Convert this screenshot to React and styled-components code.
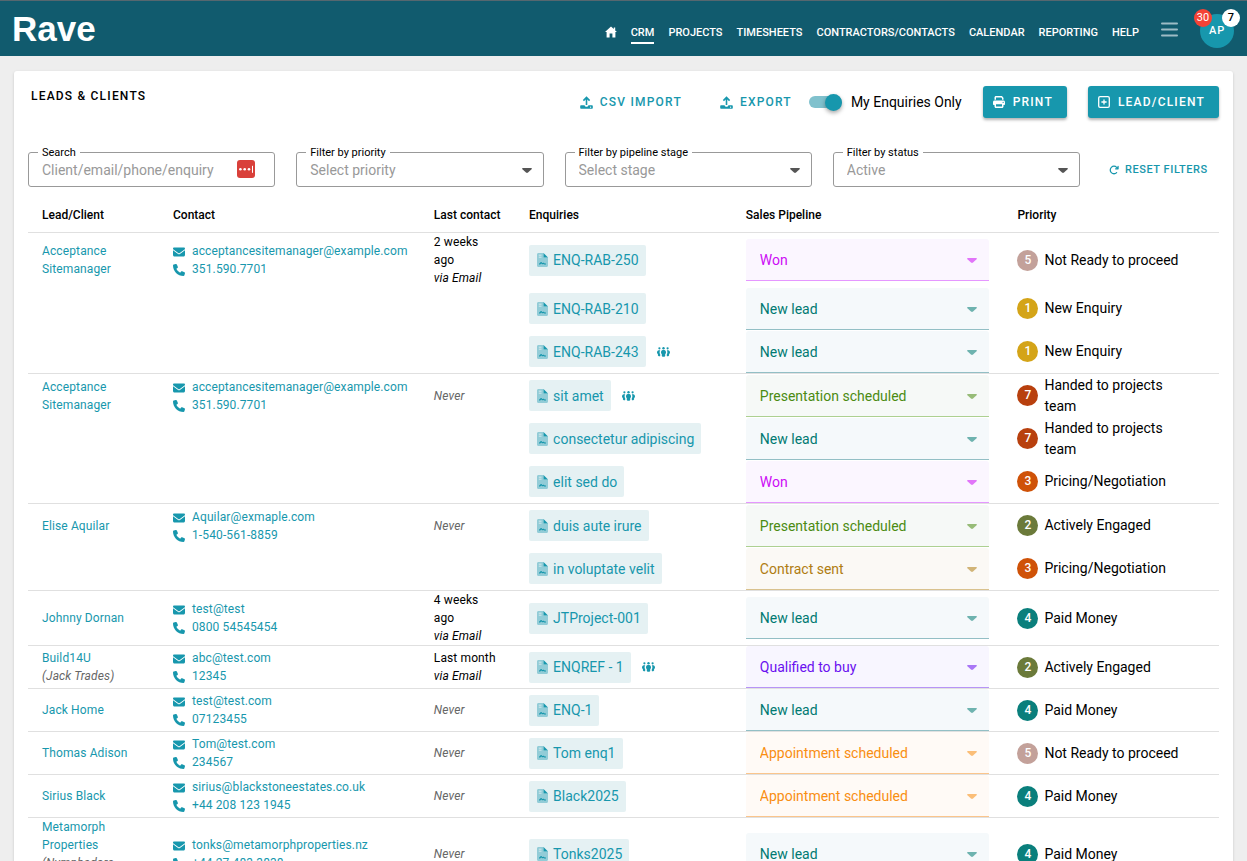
import {FaArrowRotateRight, FaEnvelope, FaPhone, FaPrint} from 'react-icons/fa6'
import styled, {createGlobalStyle, css} from 'styled-components'

const GlobalStyle = createGlobalStyle`
  :root {
    --teal: #1797ad;
    --teal-dark: #115b6e;
    --line: #e0e0e0;
  }

  * {
    box-sizing: border-box;
  }

  body {
    margin: 0;
    background-color: #eee;
    color: #000;
    font-family: Roboto, "Liberation Sans", sans-serif;
    font-size: 12px;
    line-height: 18px;
  }

  button, input, select {
    margin: 0;
    font-family: inherit;
  }

  a {
    color: var(--teal);
    text-decoration: none;
  }
`

const Header = styled.header`
  display: flex;
  align-items: center;
  height: 56px;
  padding: 0 13px 0 12px;
  border-top: 1px solid #56676f;
  background-color: var(--teal-dark);
`

const Logo = styled.a`
  margin-right: auto;
  color: #fff;
  font-family: "Liberation Sans", sans-serif;
  font-size: 35px;
  font-weight: bold;
  line-height: 54px;
`

const Nav = styled.nav`
  display: flex;
  align-items: center;
  gap: 14px;
  margin-top: 8px;
`

const NavLink = styled.a`
  display: flex;
  height: 22px;
  border-bottom: 2px solid ${({$active}) => ($active ? '#fff' : 'transparent')};
  color: #fff;
  font-size: 11px;
  font-weight: 500;
  line-height: 21px;

  svg {
    margin-top: 4px;
  }
`

const MenuButton = styled.button`
  display: flex;
  margin: 2px 22px 0;
  padding: 0;
  border: 0;
  background: none;
  color: #9dbcc5;
  cursor: pointer;
`

const Avatar = styled.button`
  position: relative;
  width: 34px;
  height: 34px;
  margin-top: 4px;
  padding: 0;
  border: 0;
  border-radius: 50%;
  background-color: var(--teal);
  color: #fff;
  font-size: 11px;
  font-weight: 500;
  letter-spacing: .08em;
`

const Badge = styled.span`
  position: absolute;
  top: -5px;
  ${({$side}) => $side}: -6px;
  width: 18px;
  height: 18px;
  border-radius: 50%;
  background-color: ${({$red}) => ($red ? '#f44336' : '#fff')};
  color: ${({$red}) => ($red ? '#fff' : '#000')};
  font-size: 11px;
  font-weight: ${({$red}) => ($red ? 400 : 500)};
  line-height: 18px;
  letter-spacing: 0;
`

const Card = styled.main`
  margin: 15px 14px;
  padding: 15px 14px;
  border-radius: 3px;
  background-color: #fff;
  box-shadow: 0 1px 3px rgba(0, 0, 0, .16);
`

const Toolbar = styled.div`
  display: flex;
  align-items: center;
  height: 32px;
`

const Title = styled.h1`
  align-self: flex-start;
  margin: 1px auto 0 3px;
  font-size: 12px;
  font-weight: 500;
  letter-spacing: .1em;
`

const Button = styled.button`
  display: inline-flex;
  align-items: center;
  gap: ${({$text}) => ($text ? '7px' : '8px')};
  height: 32px;
  padding: 0 ${({$text}) => ($text ? '0' : '14px 0 10px')};
  border: 0;
  border-radius: 3px;
  background-color: ${({$text}) => ($text ? 'transparent' : 'var(--teal)')};
  box-shadow: ${({$text}) => ($text ? 'none' : '0 2px 3px rgba(0, 0, 0, .3)')};
  color: ${({$text}) => ($text ? 'var(--teal)' : '#fff')};
  font-size: 12px;
  font-weight: 500;
  letter-spacing: .1em;
  white-space: nowrap;
  cursor: pointer;
`

const ResetButton = styled(Button)`
  gap: 6px;
  height: 35px;
  padding-left: 8px;
  font-size: 11px;
  letter-spacing: .05em;
`

const Actions = styled.div`
  display: flex;
  align-items: center;
  gap: 21px;
`

const Transfers = styled.div`
  display: flex;
  gap: 38px;
`

const SwitchGroup = styled.div`
  display: flex;
  align-items: center;
  gap: 17px;
`

const Switch = styled.label`
  display: flex;
  align-items: center;
  gap: 9px;
  font-size: 14px;

  input {
    display: flex;
    align-items: center;
    justify-content: flex-end;
    width: 33px;
    height: 12px;
    margin: 0;
    border-radius: 6px;
    background-color: #80c1cd;
    appearance: none;
  }

  input::before {
    content: '';
    width: 17px;
    height: 17px;
    border-radius: 50%;
    background-color: var(--teal);
    box-shadow: 0 2px 4px rgba(0, 0, 0, .35);
  }
`

const Filters = styled.div`
  display: grid;
  grid-template-columns: repeat(4, 1fr) 118px;
  gap: 21px;
  margin-top: 34px;
`

const Field = styled.div`
  position: relative;

  label {
    position: absolute;
    top: -9px;
    left: 10px;
    padding: 0 4px;
    background-color: #fff;
    font-size: 11px;
    line-height: 19px;
  }
`

const FieldAddon = styled.span`
  position: absolute;
  top: 8px;
  right: 20px;
  display: flex;
`

const controlStyle = css`
  display: block;
  width: 100%;
  height: 35px;
  padding: 0 13px;
  border: 1px solid #999;
  border-radius: 3px;
  background-color: #fff;
  color: #999;
  font-size: 14px;
  appearance: none;
`

const TextInput = styled.input`
  ${controlStyle}

  &::placeholder {
    color: #999;
  }
`

const Select = styled.select`
  ${controlStyle}
`

const CaretIcon = styled.svg`
  position: absolute;
  top: calc(50% - 2px);
  right: 12px;
  width: 10px;
  height: 5px;
  fill: ${({$color}) => $color};
  opacity: ${({$faded}) => ($faded ? .55 : 1)};
  pointer-events: none;
`

const Table = styled.table`
  width: 100%;
  margin-top: 10px;
  border-spacing: 0;
  table-layout: fixed;

  th {
    height: 36px;
    padding: 0 14px;
    border-bottom: 1px solid var(--line);
    font-weight: 500;
    text-align: left;
    white-space: nowrap;
  }

  td {
    height: 43px;
    padding: 0 14px;
    letter-spacing: .01em;
  }

  tbody tr:first-child td {
    height: 44px;
    border-top: 1px solid var(--line);
  }

  tbody tr:only-child td {
    height: 43px;
  }

  thead + tbody tr:first-child td {
    border-top: 0;
  }
`

const Muted = styled.em`
  color: #666;
`

const ContactLink = styled.a`
  display: flex;
  align-items: center;
  gap: 7px;
  white-space: nowrap;

  svg {
    flex: none;
    margin-top: 2px;
  }
`

const EnquiryCell = styled.div`
  display: flex;
  align-items: center;
  gap: 11px;
`

const EnquiryLink = styled.a`
  display: inline-flex;
  align-items: center;
  gap: 5px;
  height: 31px;
  padding: 0 7px 0 8px;
  border-radius: 2px;
  background-color: #e5f1f3;
  font-size: 14px;
  letter-spacing: 0;
  white-space: nowrap;
`

const StageBox = styled.div`
  position: relative;
`

const StageSelect = styled.select`
  display: block;
  width: 100%;
  height: 42px;
  padding: 1px 14px 0;
  border: 0;
  border-bottom: 1px solid ${({$stage}) => $stage.line};
  border-radius: 3px 3px 0 0;
  background-color: ${({$stage}) => $stage.background};
  color: ${({$stage}) => $stage.color};
  font-size: 14px;
  appearance: none;
`

const PriorityCell = styled.div`
  display: flex;
  align-items: center;
  gap: 6px;
  padding-right: 24px;
  font-size: 14px;
  letter-spacing: 0;
  line-height: 21px;
`

const PriorityDot = styled.span`
  flex: none;
  width: 21px;
  height: 21px;
  border-radius: 50%;
  background-color: ${({$color}) => $color};
  color: #fff;
  font-size: 12px;
  font-weight: 500;
  text-align: center;
`

const STAGES = {
  'Won': {color: '#cc0cf5', line: '#e597ff', background: '#fbf6ff'},
  'New lead': {color: '#007a72', line: '#93bfc5', background: '#f5f9fb'},
  'Presentation scheduled': {color: '#4b8b12', line: '#add091', background: '#f6f9f7'},
  'Contract sent': {color: '#b07d12', line: '#d9c28e', background: '#fbf9f5'},
  'Qualified to buy': {color: '#6a10f0', line: '#b794f6', background: '#f8f6ff'},
  'Appointment scheduled': {color: '#f98e12', line: '#fbc58c', background: '#fffaf6'},
}

const PRIORITIES = {
  1: {name: 'New Enquiry', color: '#d4a418'},
  2: {name: 'Actively Engaged', color: '#6b7a3a'},
  3: {name: 'Pricing/Negotiation', color: '#cf5208'},
  4: {name: 'Paid Money', color: '#0a7f7c'},
  5: {name: 'Not Ready to proceed', color: '#c3a19a'},
  7: {name: 'Handed to projects team', color: '#b8400e'},
}

const LEADS = [
  {
    name: 'Acceptance Sitemanager',
    email: 'acceptancesitemanager@example.com',
    phone: '351.590.7701',
    last: '2 weeks ago',
    enquiries: [
      {ref: 'ENQ-RAB-250', stage: 'Won', priority: 5},
      {ref: 'ENQ-RAB-210', stage: 'New lead', priority: 1},
      {ref: 'ENQ-RAB-243', stage: 'New lead', priority: 1, shared: true},
    ],
  },
  {
    name: 'Acceptance Sitemanager',
    email: 'acceptancesitemanager@example.com',
    phone: '351.590.7701',
    enquiries: [
      {ref: 'sit amet', stage: 'Presentation scheduled', priority: 7, shared: true},
      {ref: 'consectetur adipiscing', stage: 'New lead', priority: 7},
      {ref: 'elit sed do', stage: 'Won', priority: 3},
    ],
  },
  {
    name: 'Elise Aquilar',
    email: 'Aquilar@exmaple.com',
    phone: '1-540-561-8859',
    enquiries: [
      {ref: 'duis aute irure', stage: 'Presentation scheduled', priority: 2},
      {ref: 'in voluptate velit', stage: 'Contract sent', priority: 3},
    ],
  },
  {
    name: 'Johnny Dornan',
    email: 'test@test',
    phone: '0800 54545454',
    last: '4 weeks ago',
    enquiries: [{ref: 'JTProject-001', stage: 'New lead', priority: 4}],
  },
  {
    name: 'Build14U',
    person: '(Jack Trades)',
    email: 'abc@test.com',
    phone: '12345',
    last: 'Last month',
    enquiries: [{ref: 'ENQREF - 1', stage: 'Qualified to buy', priority: 2, shared: true}],
  },
  {
    name: 'Jack Home',
    email: 'test@test.com',
    phone: '07123455',
    enquiries: [{ref: 'ENQ-1', stage: 'New lead', priority: 4}],
  },
  {
    name: 'Thomas Adison',
    email: 'Tom@test.com',
    phone: '234567',
    enquiries: [{ref: 'Tom enq1', stage: 'Appointment scheduled', priority: 5}],
  },
  {
    name: 'Sirius Black',
    email: 'sirius@blackstoneestates.co.uk',
    phone: '+44 208 123 1945',
    enquiries: [{ref: 'Black2025', stage: 'Appointment scheduled', priority: 4}],
  },
  {
    name: 'Metamorph Properties',
    person: '(Nymphadora Tonks)',
    email: 'tonks@metamorphproperties.nz',
    phone: '+44 27 483 3838',
    enquiries: [{ref: 'Tonks2025', stage: 'New lead', priority: 4}],
  },
]

const NAV_ITEMS = [
  'CRM',
  'PROJECTS',
  'TIMESHEETS',
  'CONTRACTORS/CONTACTS',
  'CALENDAR',
  'REPORTING',
  'HELP',
]

const COLUMNS = [
  {title: 'Lead/Client', width: '11%'},
  {title: 'Contact', width: '21.9%'},
  {title: 'Last contact', width: '8%'},
  {title: 'Enquiries', width: '18.2%'},
  {title: 'Sales Pipeline', width: '22.8%'},
  {title: 'Priority', width: '18.1%'},
]

const HomeIcon = () => (
  <svg width='12' height='12' viewBox='0 0 12 12' fill='currentColor'>
    <path d='M6 .6 0 6h1.6v5.4h3V7.6h2.8v3.8h3V6H12L10.2 4.4V1.6H8.8v1.5z'/>
  </svg>
)

const MenuIcon = () => (
  <svg width='17' height='15' viewBox='0 0 17 15' stroke='currentColor' strokeWidth='2' strokeLinecap='round'>
    <path d='M1 1.5h15M1 7.5h15M1 13.5h15'/>
  </svg>
)

const UploadIcon = () => (
  <svg width='13' height='13' viewBox='0 0 13 13' fill='none' stroke='currentColor'>
    <path d='M6.5 9V1.8M3.4 4.6l3.1-3.1 3.1 3.1' strokeWidth='1.6'/>
    <path
      d='M1 9.2h3.6c0 .9.8 1.5 1.9 1.5s1.9-.6 1.9-1.5H12c.5 0 .8.3.8.8v2c0 .5-.3.8-.8.8H1c-.5 0-.8-.3-.8-.8v-2c0-.5.3-.8.8-.8z'
      fill='currentColor'
      stroke='none'
    />
    <circle cx='10.6' cy='11.2' r='.6' fill='#fff' stroke='none'/>
  </svg>
)

const PlusSquareIcon = () => (
  <svg width='12' height='12' viewBox='0 0 12 12' fill='none' stroke='currentColor' strokeWidth='1.3'>
    <rect x='.7' y='.7' width='10.6' height='10.6' rx='1.4'/>
    <path d='M6 3.4v5.2M3.4 6h5.2'/>
  </svg>
)

const PasswordIcon = () => (
  <svg width='18' height='18' viewBox='0 0 18 18'>
    <rect width='18' height='18' rx='3' fill='#d9403a'/>
    <g fill='#fff'>
      <circle cx='3.4' cy='9.2' r='1.3'/>
      <circle cx='7.7' cy='9.2' r='1.3'/>
      <circle cx='12' cy='9.2' r='1.3'/>
      <rect x='15' y='5.8' width='1' height='7'/>
    </g>
  </svg>
)

const FileIcon = () => (
  <svg width='11' height='14' viewBox='0 0 11 14'>
    <path
      d='M1.5 0H6.5V4.5H11V12.5C11 13.4 10.4 14 9.5 14H1.5C.6 14 0 13.4 0 12.5V1.5C0 .6.6 0 1.5 0z'
      fill='var(--teal)'
      opacity='.4'
    />
    <path d='M6.5 0 11 4.5H6.5z' fill='var(--teal)'/>
    <path d='M1.8 2.2h2.7M1.8 4.2h2.7' stroke='#e5f1f3' strokeWidth='.8'/>
    <path
      d='M2 11h.8l1.4-1.5 1.2 1.3 1.1-.5.9.7H9'
      fill='none'
      stroke='var(--teal)'
      strokeWidth='1.1'
      strokeLinejoin='round'
    />
  </svg>
)

const PeopleIcon = () => (
  <svg width='13' height='10' viewBox='0 0 13 10' fill='var(--teal)'>
    <circle cx='2.4' cy='1.3' r='1.1'/>
    <circle cx='6.5' cy='1.3' r='1.2'/>
    <circle cx='10.6' cy='1.3' r='1.1'/>
    <path d='M3.2 3.2H1.7C.7 3.2 0 4.4 0 5.5c0 .7.4 1.2.9 1.4v1.6l.9.8h1.1l.3-.4V7.3C2.8 6.8 2.600 6.2 2.600 5.500c0-.9.2-1.700.6-2.300z'/>
    <path d='M9.800 3.200h1.500c1 0 1.700 1.200 1.700 2.300 0 .7-.4 1.200-.9 1.400v1.600l-.9.8h-1.100l-.3-.4V7.300c.4-.5.6-1.100.6-1.800 0-.9-.2-1.700-.6-2.300z'/>
    <path d='M5.700 3.100h1.600c1 0 1.700 1.200 1.700 2.400 0 .7-.3 1.300-.8 1.600v1.800l-.7.9h-2l-.7-.9V7.100c-.5-.3-.8-.9-.8-1.600 0-1.200.7-2.400 1.700-2.400z'/>
  </svg>
)

function Caret ({color, faded}) {
  return (
    <CaretIcon viewBox='0 0 10 5' $color={color} $faded={faded}>
      <path d='M1 0h8c.9 0 1.2.7.6 1.3L6 4.6c-.6.5-1.4.5-2 0L.4 1.3C-.2.7.1 0 1 0z'/>
    </CaretIcon>
  )
}

function FilterSelect ({id, label, value}) {
  return (
    <Field>
      <label htmlFor={id}>{label}</label>
      <Select id={id}>
        <option>{value}</option>
      </Select>
      <Caret color='#555'/>
    </Field>
  )
}

function LeadCells ({lead}) {
  return (
    <>
      <td>
        <a href='#lead'>{lead.name}</a>
        {lead.person && (
          <>
            <br/>
            <Muted>{lead.person}</Muted>
          </>
        )}
      </td>
      <td>
        <ContactLink href={`mailto:${lead.email}`}>
          <FaEnvelope size={12}/>
          {lead.email}
        </ContactLink>
        <ContactLink href={`tel:${lead.phone}`}>
          <FaPhone size={12}/>
          {lead.phone}
        </ContactLink>
      </td>
      <td>
        {lead.last ? (
          <>
            {lead.last}
            <br/>
            <em>via Email</em>
          </>
        ) : <Muted>Never</Muted>}
      </td>
    </>
  )
}

function EnquiryCells ({enquiry}) {
  const stage = STAGES[enquiry.stage]
  const priority = PRIORITIES[enquiry.priority]

  return (
    <>
      <td>
        <EnquiryCell>
          <EnquiryLink href='#enquiry'>
            <FileIcon/>
            {enquiry.ref}
          </EnquiryLink>
          {enquiry.shared && <PeopleIcon/>}
        </EnquiryCell>
      </td>
      <td>
        <StageBox>
          <StageSelect
            $stage={stage}
            aria-label={`Sales pipeline stage of ${enquiry.ref}`}
            defaultValue={enquiry.stage}
          >
            {Object.keys(STAGES).map(name => <option key={name}>{name}</option>)}
          </StageSelect>
          <Caret color={stage.color} faded/>
        </StageBox>
      </td>
      <td>
        <PriorityCell>
          <PriorityDot $color={priority.color}>{enquiry.priority}</PriorityDot>
          {priority.name}
        </PriorityCell>
      </td>
    </>
  )
}

export default function App () {
  return (
    <>
      <GlobalStyle/>
      <Header>
        <Logo href='#home'>Rave</Logo>
        <Nav>
          <NavLink href='#home' aria-label='Home'>
            <HomeIcon/>
          </NavLink>
          {NAV_ITEMS.map(item => (
            <NavLink key={item} href={`#${item.toLowerCase()}`} $active={item === 'CRM'}>
              {item}
            </NavLink>
          ))}
        </Nav>
        <MenuButton aria-label='Menu'>
          <MenuIcon/>
        </MenuButton>
        <Avatar>
          AP
          <Badge $side='left' $red>30</Badge>
          <Badge $side='right'>7</Badge>
        </Avatar>
      </Header>
      <Card>
        <Toolbar>
          <Title>LEADS &amp; CLIENTS</Title>
          <Actions>
            <SwitchGroup>
              <Transfers>
                <Button $text>
                  <UploadIcon/>
                  CSV IMPORT
                </Button>
                <Button $text>
                  <UploadIcon/>
                  EXPORT
                </Button>
              </Transfers>
              <Switch>
                <input type='checkbox' role='switch' defaultChecked/>
                My Enquiries Only
              </Switch>
            </SwitchGroup>
            <Button>
              <FaPrint size={12}/>
              PRINT
            </Button>
            <Button>
              <PlusSquareIcon/>
              LEAD/CLIENT
            </Button>
          </Actions>
        </Toolbar>
        <Filters>
          <Field>
            <label htmlFor='search'>Search</label>
            <TextInput id='search' placeholder='Client/email/phone/enquiry'/>
            <FieldAddon>
              <PasswordIcon/>
            </FieldAddon>
          </Field>
          <FilterSelect id='priority' label='Filter by priority' value='Select priority'/>
          <FilterSelect id='stage' label='Filter by pipeline stage' value='Select stage'/>
          <FilterSelect id='status' label='Filter by status' value='Active'/>
          <ResetButton $text>
            <FaArrowRotateRight size={10}/>
            RESET FILTERS
          </ResetButton>
        </Filters>
        <Table>
          <colgroup>
            {COLUMNS.map(({title, width}) => <col key={title} width={width}/>)}
          </colgroup>
          <thead>
            <tr>
              {COLUMNS.map(({title}) => <th key={title}>{title}</th>)}
            </tr>
          </thead>
          {LEADS.map((lead, leadIndex) => (
            <tbody key={leadIndex}>
              {lead.enquiries.map((enquiry, index) => (
                <tr key={enquiry.ref}>
                  {index === 0 ? <LeadCells lead={lead}/> : <td colSpan={3}/>}
                  <EnquiryCells enquiry={enquiry}/>
                </tr>
              ))}
            </tbody>
          ))}
        </Table>
      </Card>
    </>
  )
}
